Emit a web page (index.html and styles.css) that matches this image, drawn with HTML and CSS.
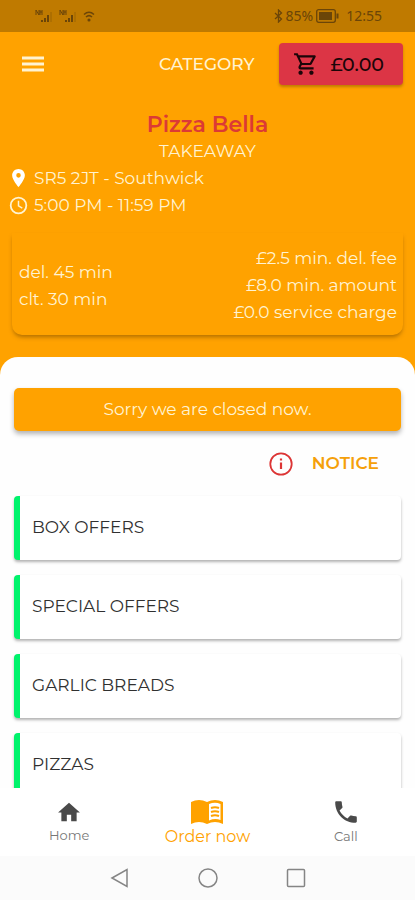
FILE: index.html
```html
<!DOCTYPE html>
<html lang="en">
<head>
<meta charset="utf-8">
<meta name="viewport" content="width=device-width, initial-scale=1">
<title>Pizza Bella</title>
<link rel="stylesheet" href="styles.css">
</head>
<body>
<div class="status">
  <div class="status-left">
    <svg width="19" height="14" viewBox="0 0 19 14"><path d="M1 6V1l3 5V1M5 1v5M5 3h2M7 1v5" fill="none" stroke="currentColor"/><path d="M7 13v-2M10 13V9M13 13V6" stroke="currentColor" stroke-width="2"/><path d="M16 13V3" stroke="currentColor" opacity=".4"/></svg>
    <svg width="19" height="14" viewBox="0 0 19 14"><path d="M1 6V1l3 5V1M5 1v5M5 3h2M7 1v5" fill="none" stroke="currentColor"/><path d="M7 13v-2M10 13V9M13 13V6" stroke="currentColor" stroke-width="2"/><path d="M16 13V3" stroke="currentColor" opacity=".4"/></svg>
    <svg width="12" height="12" viewBox="0 0 12 12" fill="none" stroke="currentColor" stroke-width="1.5"><path d="M1 4.500Q6 0 11 4.500M3 7Q6 4.200 9 7"/><circle cx="6" cy="10" r=".8" fill="currentColor"/></svg>
  </div>
  <div class="status-right">
    <svg width="9" height="14" viewBox="0 0 9 14" fill="none" stroke="currentColor" stroke-width="1.300"><path d="M1 4l6.500 6L4.500 13V1l3 3L1 10"/></svg>
    <span>85%</span>
    <svg class="battery" width="23" height="14" viewBox="0 0 23 14"><rect x=".7" y=".7" width="18.600" height="12.600" rx="2" fill="none" stroke="currentColor" stroke-width="1.300"/><path d="M3 3h13v8H3zM20.500 4.500h2v5h-2z" fill="currentColor"/></svg>
    <span>12:55</span>
  </div>
</div>
<header class="bar">
  <button class="menu" aria-label="Menu"><svg width="22" height="16" viewBox="0 0 22 16"><path d="M0 2h22M0 8h22M0 14h22" stroke="currentColor" stroke-width="3"/></svg></button>
  <a class="category" href="#categories">CATEGORY</a>
  <button class="cart"><svg width="26" height="26" viewBox="0 0 24 24" fill="currentColor"><path d="M15.550 13c.75 0 1.410-.41 1.750-1.030l3.580-6.490A.996.996 0 0 0 20.010 4H5.210l-.94-2H1v2h2l3.600 7.590-1.350 2.440C4.520 15.370 5.480 17 7 17h12v-2H7l1.100-2h7.450zM6.160 6h12.150l-2.760 5H8.530L6.160 6zM7 18c-1.100 0-1.990.9-1.990 2S5.900 22 7 22s2-.9 2-2-.9-2-2-2zm10 0c-1.100 0-1.990.9-1.990 2s.89 2 1.990 2 2-.9 2-2-.9-2-2-2z"/></svg><span>£0.00</span></button>
</header>
<section class="shop">
  <h1>Pizza Bella</h1>
  <p class="kind">TAKEAWAY</p>
  <p class="info"><svg class="pin" width="19" height="20" viewBox="2 2 20 22" fill="currentColor"><path d="M12 2C8.130 2 5 5.130 5 9c0 5.250 7 13 7 13s7-7.750 7-13c0-3.870-3.130-7-7-7zm0 9.500a2.500 2.500 0 0 1 0-5 2.500 2.500 0 0 1 0 5z"/></svg>SR5 2JT - Southwick</p>
  <p class="info"><svg width="19" height="19" viewBox="0 0 19 19" fill="none" stroke="currentColor" stroke-width="1.800"><circle cx="9.500" cy="9.500" r="7.800"/><path d="M9.500 4.800v5l3.800 2.300" stroke-width="1.500"/></svg>5:00 PM - 11:59 PM</p>
  <div class="terms">
    <div><p>del. 45 min</p><p>clt. 30 min</p></div>
    <div class="fees"><p>£2.5 min. del. fee</p><p>£8.0 min. amount</p><p>£0.0 service charge</p></div>
  </div>
</section>
<main class="sheet" id="categories">
  <p class="closed">Sorry we are closed now.</p>
  <button class="notice"><svg width="24" height="24" viewBox="0 0 24 24" fill="none" stroke="currentColor" stroke-width="1.800"><circle cx="12" cy="12" r="10.700"/><path d="M12 10.500V17M12 6.500v2" stroke-width="2.200"/></svg><span>NOTICE</span></button>
  <a class="card" href="#box">BOX OFFERS</a>
  <a class="card" href="#special">SPECIAL OFFERS</a>
  <a class="card" href="#garlic">GARLIC BREADS</a>
  <a class="card" href="#pizzas">PIZZAS</a>
</main>
<nav class="tabs">
  <a href="#home"><svg width="24" height="22" viewBox="1 2 22 19" fill="currentColor"><path d="M10 20v-6h4v6h5v-8h3L12 3 2 12h3v8z"/></svg><span>Home</span></a>
  <a class="active" href="#order"><svg width="34" height="26" viewBox="0 0 34 26"><path d="M1 3Q9-1 17 3Q25-1 33 3V25Q25 21 17 25Q9 21 1 25z" fill="currentColor"/><path d="M19 5Q25 2.500 30.500 5V21Q25 19 19 21.500z" fill="#fff"/><path d="M21 9q4-1.500 8 0M21 13q4-1.500 8 0M21 17q4-1.500 8 0" fill="none" stroke="currentColor" stroke-width="2"/></svg><span>Order now</span></a>
  <a href="#call"><svg width="24" height="24" viewBox="2 2 20 20" fill="currentColor"><path d="M6.620 10.790c1.440 2.830 3.760 5.140 6.590 6.590l2.200-2.200c.27-.27.67-.36 1.020-.24 1.120.37 2.330.57 3.570.57.550 0 1 .45 1 1V20c0 .55-.45 1-1 1C10.610 21 3 13.390 3 4c0-.55.45-1 1-1h3.500c.55 0 1 .45 1 1 0 1.250.2 2.450.57 3.570.11.35.03.74-.25 1.020z"/></svg><span>Call</span></a>
</nav>
<div class="system">
  <button aria-label="Back"><svg width="20" height="20" viewBox="0 0 20 20"><path d="M2 10L17 1.500v17z"/></svg></button>
  <button aria-label="Home screen"><svg width="20" height="20" viewBox="0 0 20 20"><circle cx="10" cy="10" r="9"/></svg></button>
  <button aria-label="Recent apps"><svg width="20" height="20" viewBox="0 0 20 20"><rect x="1.500" y="1.500" width="17" height="17" rx="1"/></svg></button>
</div>
</body>
</html>
```
FILE: styles.css
```css
* { box-sizing: border-box; }
body {
  margin: 0;
  height: 100vh;
  display: flex;
  flex-direction: column;
  overflow: hidden;
  background: #ffa200;
  color: #fff3d2;
  font: 400 17px/27px "Montserrat", "Inter", sans-serif;
}
h1, p { margin: 0; }
a { color: inherit; text-decoration: none; }
button { border: 0; padding: 0; background: none; font: inherit; color: inherit; }
svg { display: block; flex: none; }

.status {
  display: flex;
  flex: none;
  justify-content: space-between;
  align-items: center;
  height: 32px;
  padding: 0 33px 0 35px;
  background: #bf7a00;
  color: #6b4508;
  font: 14px/20px "Noto Sans", sans-serif;
}
.status-left, .status-right { display: flex; align-items: center; gap: 3px; }
.status-left { gap: 5px; }
.battery { margin-right: 4px; }

.bar {
  display: flex;
  flex: none;
  align-items: center;
  height: 64px;
  padding: 0 12px 0 22px;
  font-weight: 500;
}
.category { margin-left: auto; margin-right: 24px; }
.cart {
  display: flex;
  align-items: center;
  gap: 12px;
  height: 42px;
  padding: 0 19px 0 14px;
  border-radius: 4px;
  background: #dc3545;
  box-shadow: 0 2px 3px rgba(0, 0, 0, .25);
  color: #1b0508;
  font-size: 19px;
}

.shop { flex: none; padding: 15px 12px 22px; }
.shop h1 {
  color: #dc3a35;
  font-size: 22px;
  line-height: 27px;
  font-weight: 600;
  text-align: center;
}
.kind { text-align: center; }
.info {
  display: flex;
  align-items: center;
  gap: 6px;
  margin-left: -3px;
}
.pin { color: #fff; }
.terms {
  display: flex;
  justify-content: space-between;
  align-items: center;
  margin-top: 14px;
  padding: 12px 6px 9px 7px;
  border-radius: 0 0 10px 10px;
  box-shadow: 0 3px 4px -1px rgba(100, 60, 0, .5);
}
.fees { text-align: right; }

.sheet {
  flex: 1;
  min-height: 0;
  overflow: hidden;
  display: flex;
  flex-direction: column;
  padding: 31px 14px 0;
  border-radius: 18px 18px 0 0;
  background: #fefefe;
}
.closed {
  flex: none;
  padding: 8px;
  border-radius: 5px;
  background: #ffa200;
  box-shadow: 0 3px 5px rgba(0, 0, 0, .3);
  text-align: center;
}
.notice {
  display: flex;
  flex: none;
  align-items: center;
  align-self: flex-end;
  gap: 19px;
  height: 65px;
  padding-right: 22px;
  color: #dc3535;
}
.notice span { color: #f5a00a; font-weight: 600; }
.card {
  flex: none;
  height: 64px;
  margin-bottom: 15px;
  padding: 18px 12px;
  border-left: 6px solid #00f36c;
  border-radius: 4px;
  background: #fff;
  box-shadow: 0 2px 3px rgba(0, 0, 0, .3);
  color: #303030;
}

.tabs {
  display: grid;
  flex: none;
  grid-template-columns: repeat(3, 1fr);
  height: 68px;
  background: #fff;
  color: #777;
  font-size: 13px;
  line-height: 20px;
}
.tabs a {
  display: flex;
  flex-direction: column;
  align-items: center;
  justify-content: center;
  gap: 2px;
  padding-top: 2px;
}
.tabs svg { color: #4a4a4a; }
.tabs .active, .tabs .active svg { color: #ffa200; }
.tabs .active { font-size: 16px; }

.system {
  display: flex;
  flex: none;
  justify-content: center;
  gap: 68px;
  height: 44px;
  background: #fbfbfb;
}
.system svg { fill: none; stroke: #858585; stroke-width: 1.5; }
```
